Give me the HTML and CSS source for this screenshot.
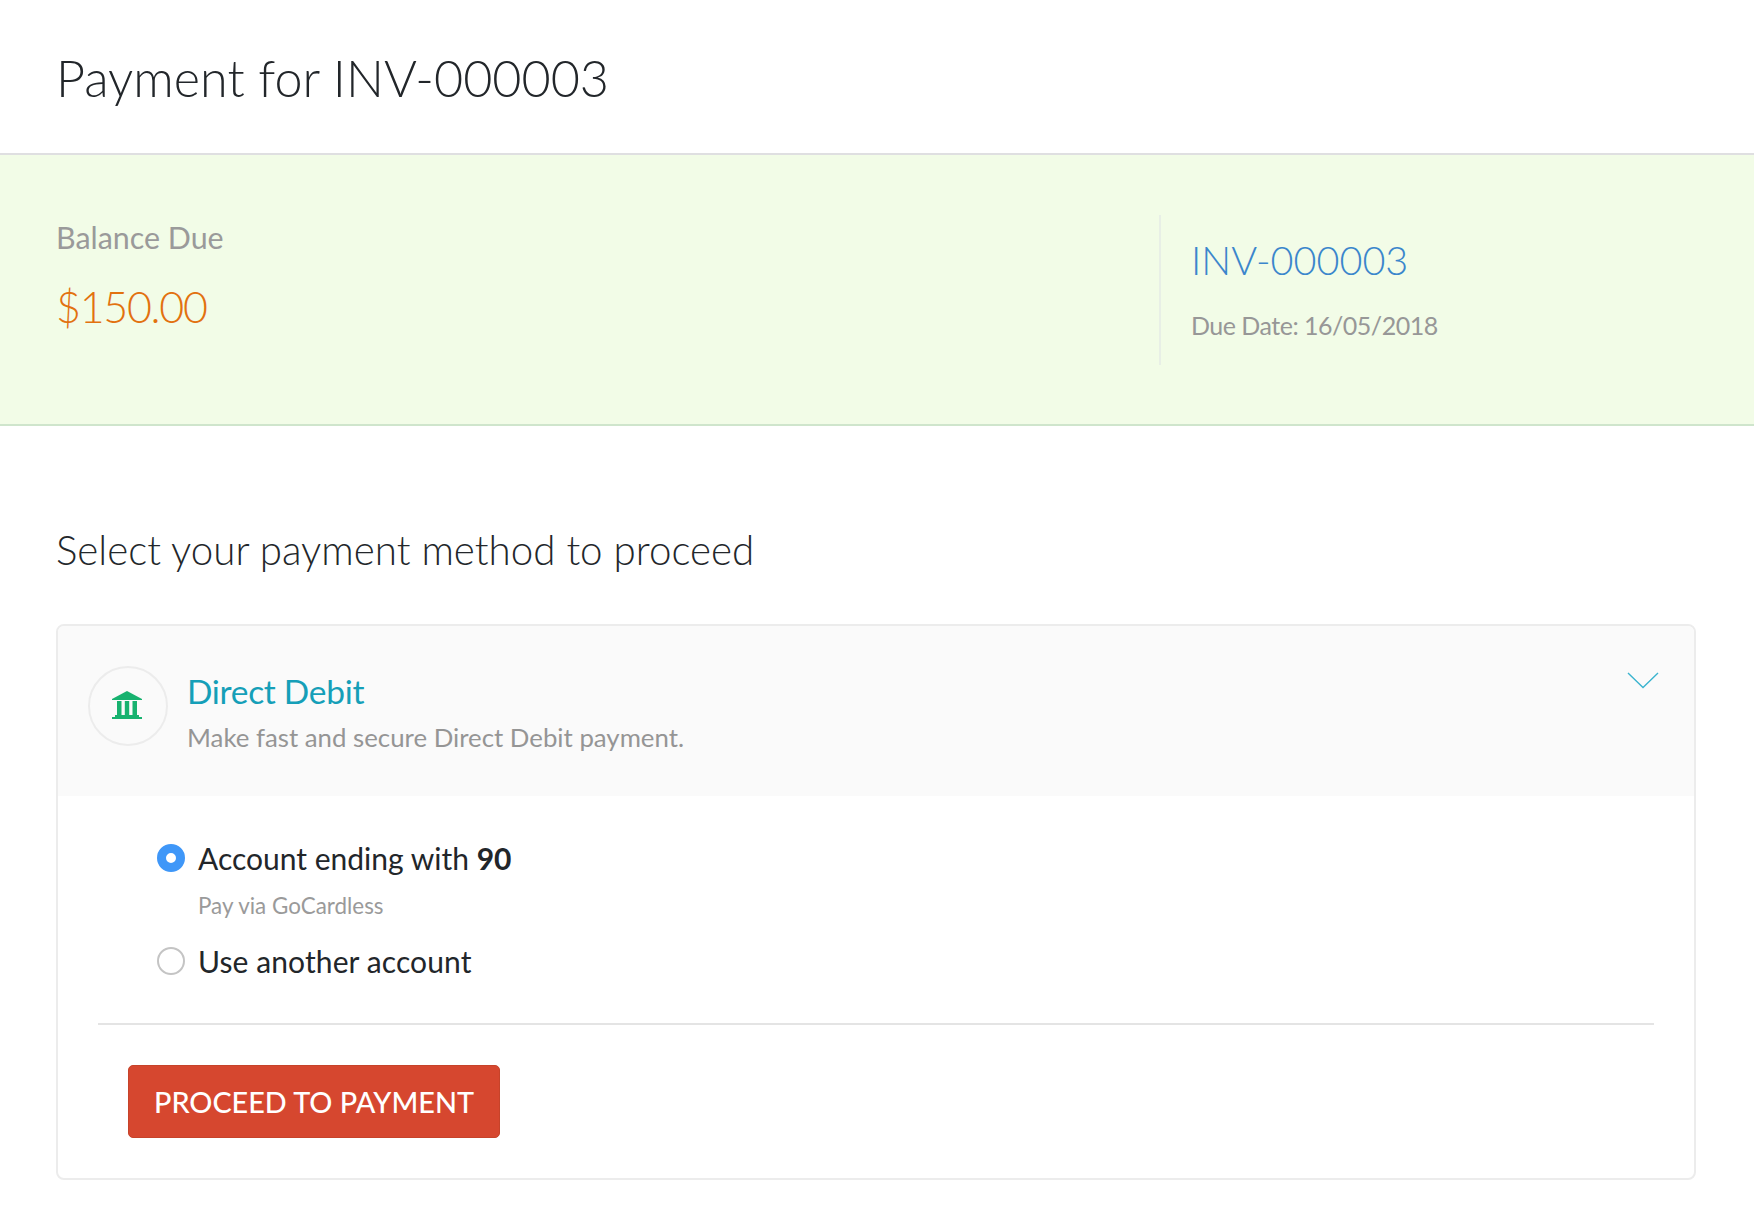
FILE: index.html
```html
<!DOCTYPE html>
<html lang="en">
<head>
<meta charset="utf-8">
<title>Payment for INV-000003</title>
<link rel="stylesheet" href="styles.css">
</head>
<body>
<header class="page-head">
  <h1 class="page-title">Payment for INV-000003</h1>
</header>
<section class="summary">
  <div class="balance">
    <div class="balance-label">Balance Due</div>
    <div class="balance-amount">$150.00</div>
  </div>
  <div class="invoice">
    <div class="invoice-number">INV-000003</div>
    <div class="invoice-date">Due Date: 16/05/2018</div>
  </div>
</section>
<main class="content">
  <h2 class="section-title">Select your payment method to proceed</h2>
  <div class="card">
    <div class="card-head">
      <div class="icon-circle">
        <svg class="bank-icon" viewBox="0 0 30 28" aria-hidden="true">
          <path d="M15 0 L30 8 V9 H0 V8 Z"/>
          <path d="M5 10 H9.500 V25 H5 Z M12.800 10 H17.200 V25 H12.800 Z M20.500 10 H25 V25 H20.500 Z"/>
          <path d="M3 24 H27 V26 H3 Z M0 26 H30 V28 H0 Z"/>
        </svg>
      </div>
      <div class="method">
        <div class="method-name">Direct Debit</div>
        <div class="method-desc">Make fast and secure Direct Debit payment.</div>
      </div>
      <svg class="chevron" viewBox="0 0 32 17" aria-hidden="true">
        <path d="M1 1 L16 15.500 L31 1"/>
      </svg>
    </div>
    <div class="card-body">
      <div class="options">
        <div class="option">
          <span class="radio radio-on"></span>
          <span class="option-label">Account ending with <b>90</b></span>
        </div>
        <div class="option-note">Pay via GoCardless</div>
        <div class="option">
          <span class="radio"></span>
          <span class="option-label option-label-wide">Use another account</span>
        </div>
      </div>
      <div class="actions">
        <button class="proceed" type="button">PROCEED TO PAYMENT</button>
      </div>
    </div>
  </div>
</main>
</body>
</html>
```
FILE: styles.css
```css
* { box-sizing: border-box; }
html, body { margin: 0; padding: 0; }
body {
  background: #fff;
  font-family: "Lato", "Open Sans", sans-serif;
  color: #212529;
  overflow: hidden;
}
.page-head {
  height: 155px;
  padding: 46px 56px 0;
  border-bottom: 2px solid #dfdfe1;
}
.page-title {
  margin: 0;
  font-size: 50.300px;
  line-height: 64px;
  font-weight: 300;
  color: #22262a;
}
.summary {
  height: 271px;
  background: #f2fce7;
  border-bottom: 2px solid #cfe5cc;
  display: grid;
  grid-template-columns: 1159px 1fr;
  padding-top: 60px;
}
.balance { padding-left: 56px; padding-top: 4px; }
.balance-label {
  font-size: 30.400px;
  line-height: 36px;
  color: #9a9a9a;
}
.balance-amount {
  margin-top: 27px;
  font-size: 43px;
  line-height: 50px;
  font-weight: 300;
  letter-spacing: -1.300px;
  color: #e2710f;
}
.invoice {
  height: 150px;
  border-left: 2px solid #e8efe6;
  padding-left: 30px;
  padding-top: 21px;
}
.invoice-number {
  font-size: 39.600px;
  line-height: 48px;
  font-weight: 300;
  color: #3b86cc;
}
.invoice-date {
  margin-top: 24px;
  font-size: 25px;
  line-height: 34px;
  letter-spacing: -0.500px;
  color: #979797;
}
.content { padding: 0 58px 0 56px; }
.section-title {
  margin: 0;
  padding-top: 99px;
  font-size: 40.300px;
  line-height: 50px;
  font-weight: 300;
  color: #23272b;
}
.card {
  margin-top: 49px;
  height: 556px;
  border: 2px solid #ececec;
  border-radius: 8px;
  background: #fff;
  overflow: hidden;
}
.card-head {
  height: 170px;
  background: #fafafa;
  display: flex;
  align-items: flex-start;
  padding: 40px 35px 0 30px;
}
.icon-circle {
  flex: none;
  width: 80px;
  height: 80px;
  border: 2px solid #ececec;
  border-radius: 50%;
  display: flex;
  align-items: center;
  justify-content: center;
}
.bank-icon { width: 30px; height: 28px; margin: 0 2px 2px 0; fill: #17b26f; }
.method { flex: 1; padding-left: 19px; padding-top: 3px; }
.method-name {
  font-size: 33.500px;
  line-height: 44px;
  font-weight: 400;
  letter-spacing: -0.300px;
  color: #159fb8;
}
.method-desc {
  margin-top: 7px;
  font-size: 25.800px;
  line-height: 34px;
  color: #959595;
}
.chevron {
  flex: none;
  width: 32px;
  height: 17px;
  margin-top: 6px;
  fill: none;
  stroke: #3bb4cf;
  stroke-width: 1.4;
}
.card-body { padding: 44px 40px 0; }
.options {
  padding: 0 0 44px 59px;
  border-bottom: 2px solid #e4e4e4;
}
.option {
  display: flex;
  align-items: center;
  gap: 13px;
  height: 36px;
}
.radio {
  flex: none;
  width: 28px;
  height: 28px;
  border-radius: 50%;
  border: 2px solid #c4c4c4;
  background: #fff;
}
.radio-on {
  border: 9.500px solid #3f97f8;
}
.option-label {
  font-size: 30px;
  line-height: 36px;
  color: #22262a;
}
.option-label-wide { letter-spacing: 0.100px; }
.option-label b { font-weight: 700; }
.option-note {
  margin: 15px 0 22px 41px;
  font-size: 22.400px;
  line-height: 30px;
  color: #9a9a9a;
}
.actions { padding: 40px 0 0 30px; }
.proceed {
  display: block;
  width: 372px;
  height: 73px;
  padding: 0;
  border: 1px solid #c6432a;
  border-radius: 5px;
  background: #d6472f;
  color: #fff;
  font-family: inherit;
  font-size: 28.800px;
  font-weight: 500;
}
```
